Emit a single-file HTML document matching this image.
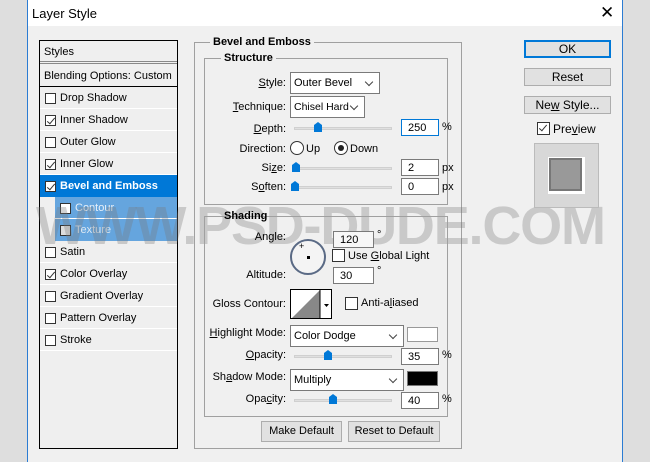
<!DOCTYPE html>
<html><head><style>
*{box-sizing:border-box;margin:0;padding:0}
body{width:650px;height:462px;overflow:hidden;background:#dedede;font-family:"Liberation Sans",Arial,sans-serif;font-size:11px;color:#000;position:relative}
.a{position:absolute}
.dlg{left:27px;top:0;width:596px;height:462px;background:#f0f0f0;border-left:1px solid #2b7cd3;border-right:1px solid #2b7cd3}
.title{left:28px;top:0;width:594px;height:26px;background:#fff;font-size:13px;padding:6px 0 0 4px}
.panel{left:39px;top:40px;width:139px;height:409px;border:1px solid #000;background:#efefef}
.row{position:absolute;left:0;width:137px;height:22px;border-bottom:1px solid #fff;line-height:22px;padding-left:20px}
.cb{position:absolute;width:11px;height:11px;border:1px solid #333;background:#fff}
.row .cb{left:5px;top:6px}
.ck::after{content:"";position:absolute;left:3px;top:0px;width:3px;height:7px;border:solid #333;border-width:0 1px 1px 0;transform:rotate(40deg)}
.box{border:1px solid #a0a0a0}
.lbl{position:absolute;background:#f0f0f0;font-weight:bold;padding:0 3px}
.r{position:absolute;text-align:right}
.dd{position:absolute;background:#fff;border:1px solid #7a7a7a;padding-left:3px;line-height:21px}
.dd::after{content:"";position:absolute;right:7px;top:6px;width:5px;height:5px;border:solid #444;border-width:0 1px 1px 0;transform:rotate(45deg)}
.in{position:absolute;background:#fff;border:1px solid #7a7a7a;padding-left:6px;line-height:17px;height:17px}
.trk{position:absolute;height:3px;background:#e0e0e0;border:1px solid #d0d0d0;width:98px}
.th{position:absolute;width:8px;height:10px;background:#0078d7;clip-path:polygon(0 30%,50% 0,100% 30%,100% 100%,0 100%)}
.btn{position:absolute;background:#e1e1e1;border:1px solid #adadad;text-align:center;line-height:16px;font-size:12px}
u{text-decoration:underline}
</style></head><body>
<div class="a dlg"></div>
<div class="a title">Layer Style</div>
<div class="a" style="left:600px;top:3px;font-size:17px">✕</div>

<div class="a panel">
 <div class="row" style="top:0;padding-left:4px;height:23px;border-bottom:3px double #888">Styles</div>
 <div class="row" style="top:24px;padding-left:4px;border-bottom:1px solid #000">Blending Options: Custom</div>
 <div class="row" style="top:46px"><span class="cb"></span>Drop Shadow</div>
 <div class="row" style="top:68px"><span class="cb ck"></span>Inner Shadow</div>
 <div class="row" style="top:90px"><span class="cb"></span>Outer Glow</div>
 <div class="row" style="top:112px"><span class="cb ck"></span>Inner Glow</div>
 <div class="row" style="top:134px;background:#0078d7;color:#fff;font-weight:bold;border-bottom:0"><span class="cb ck"></span>Bevel and Emboss</div>
 <div class="row" style="top:156px;left:15px;width:122px;background:#65a5de;color:#e8f0f8;border-bottom:1px solid #fff"><span class="cb"></span>Contour</div>
 <div class="row" style="top:178px;left:15px;width:122px;background:#65a5de;color:#dde8f2;border-bottom:0"><span class="cb" style="background:#ddd"></span>Texture</div>
 <div class="row" style="top:200px"><span class="cb"></span>Satin</div>
 <div class="row" style="top:222px"><span class="cb ck"></span>Color Overlay</div>
 <div class="row" style="top:244px"><span class="cb"></span>Gradient Overlay</div>
 <div class="row" style="top:266px"><span class="cb"></span>Pattern Overlay</div>
 <div class="row" style="top:288px"><span class="cb"></span>Stroke</div>
</div>

<div class="a box" style="left:194px;top:42px;width:268px;height:407px"></div>
<div class="lbl" style="left:210px;top:36px">Bevel and Emboss</div>
<div class="a box" style="left:204px;top:58px;width:244px;height:147px"></div>
<div class="lbl" style="left:221px;top:52px">Structure</div>

<div class="r" style="left:220px;width:66px;top:77px"><u>S</u>tyle:</div>
<div class="dd" style="left:290px;top:72px;width:90px;height:22px">Outer Bevel</div>
<div class="r" style="left:220px;width:66px;top:101px"><u>T</u>echnique:</div>
<div class="dd" style="left:290px;top:96px;width:75px;height:22px;font-size:10.5px">Chisel Hard</div>
<div class="r" style="left:220px;width:66px;top:123px"><u>D</u>epth:</div>
<div class="trk" style="left:294px;top:127px"></div><div class="th" style="left:314px;top:122px"></div>
<div class="in" style="left:401px;top:119px;width:38px;border-color:#0078d7">250</div><div class="a" style="left:442px;top:121px">%</div>
<div class="r" style="left:220px;width:66px;top:143px">Direction:</div>
<div class="a" style="left:290px;top:141px;width:14px;height:14px;border:1px solid #333;border-radius:50%;background:#fff"></div><div class="a" style="left:306px;top:143px">Up</div>
<div class="a" style="left:334px;top:141px;width:14px;height:14px;border:1px solid #333;border-radius:50%;background:#fff"></div><div class="a" style="left:338px;top:145px;width:6px;height:6px;border-radius:50%;background:#222"></div><div class="a" style="left:350px;top:143px">Down</div>
<div class="r" style="left:220px;width:66px;top:162px">Si<u>z</u>e:</div>
<div class="trk" style="left:294px;top:167px"></div><div class="th" style="left:292px;top:162px"></div>
<div class="in" style="left:401px;top:159px;width:38px">2</div><div class="a" style="left:442px;top:162px">px</div>
<div class="r" style="left:220px;width:66px;top:181px">S<u>o</u>ften:</div>
<div class="trk" style="left:294px;top:186px"></div><div class="th" style="left:291px;top:181px"></div>
<div class="in" style="left:401px;top:178px;width:38px">0</div><div class="a" style="left:442px;top:181px">px</div>

<div class="a" style="left:36px;top:195px;font:bold 54px 'Liberation Sans',Arial,sans-serif;color:rgba(120,120,120,0.33);letter-spacing:-1.2px;white-space:nowrap">WWW.PSD-DUDE.COM</div>

<div class="a box" style="left:204px;top:216px;width:244px;height:201px"></div>
<div class="lbl" style="left:221px;top:210px;background:transparent">Shading</div>
<div class="r" style="left:220px;width:66px;top:231px">An<u>g</u>le:</div>
<div class="in" style="left:333px;top:231px;width:41px;height:17px;background:#f7f7f7">120</div><div class="a" style="left:377px;top:229px">°</div>
<div class="a" style="left:290px;top:239px;width:36px;height:36px;border:2px solid #5a6a85;border-radius:50%;background:#f4f4f4"></div>
<div class="a" style="left:307px;top:256px;width:3px;height:3px;background:#000"></div>
<div class="a" style="left:299px;top:241px;font-size:9px">+</div>
<div class="cb" style="left:332px;top:249px;width:13px;height:13px"></div><div class="a" style="left:348px;top:250px">Use <u>G</u>lobal Light</div>
<div class="r" style="left:220px;width:66px;top:269px">Altitude:</div>
<div class="in" style="left:333px;top:267px;width:41px">30</div><div class="a" style="left:377px;top:265px">°</div>
<div class="r" style="left:200px;width:86px;top:298px">Gloss Contour:</div>
<div class="a" style="left:290px;top:289px;width:42px;height:30px;border:1px solid #000;background:#fff;overflow:hidden">
<svg width="42" height="30" style="position:absolute;left:0;top:0"><polygon points="0,29 29,0 29,29" fill="#888"/><line x1="29" y1="0" x2="29" y2="29" stroke="#000"/><polygon points="33,14 38,14 35.5,17" fill="#000"/></svg></div>
<div class="cb" style="left:345px;top:297px;width:13px;height:13px"></div><div class="a" style="left:361px;top:297px">Anti-a<u>l</u>iased</div>
<div class="r" style="left:200px;width:86px;top:327px"><u>H</u>ighlight Mode:</div>
<div class="dd" style="left:290px;top:325px;width:114px;height:22px">Color Dodge</div>
<div class="a" style="left:407px;top:327px;width:31px;height:15px;background:#fff;border:1px solid #999"></div>
<div class="r" style="left:220px;width:66px;top:349px"><u>O</u>pacity:</div>
<div class="trk" style="left:294px;top:355px"></div><div class="th" style="left:324px;top:350px"></div>
<div class="in" style="left:401px;top:348px;width:38px">35</div><div class="a" style="left:442px;top:349px">%</div>
<div class="r" style="left:200px;width:86px;top:371px">Sh<u>a</u>dow Mode:</div>
<div class="dd" style="left:290px;top:369px;width:114px;height:22px">Multiply</div>
<div class="a" style="left:407px;top:371px;width:31px;height:15px;background:#000;border:1px solid #777"></div>
<div class="r" style="left:220px;width:66px;top:393px">Opa<u>c</u>ity:</div>
<div class="trk" style="left:294px;top:399px"></div><div class="th" style="left:329px;top:394px"></div>
<div class="in" style="left:401px;top:392px;width:38px">40</div><div class="a" style="left:442px;top:393px">%</div>
<div class="btn" style="left:261px;top:421px;width:81px;height:21px;line-height:19px;font-size:11px">Make Default</div>
<div class="btn" style="left:348px;top:421px;width:92px;height:21px;line-height:19px;font-size:11px">Reset to Default</div>

<div class="btn" style="left:524px;top:40px;width:87px;height:18px;border:2px solid #0078d7;line-height:14px">OK</div>
<div class="btn" style="left:524px;top:68px;width:87px;height:18px">Reset</div>
<div class="btn" style="left:524px;top:96px;width:87px;height:18px">Ne<u>w</u> Style...</div>
<div class="cb ck" style="left:537px;top:122px;width:13px;height:13px"></div>
<div class="a" style="left:553px;top:122px;font-size:12px">Pre<u>v</u>iew</div>
<div class="a" style="left:534px;top:143px;width:65px;height:65px;background:#d8d8d8;border:1px solid #bbb"></div>
<div class="a" style="left:548px;top:157px;width:37px;height:37px;background:#fff"></div>
<div class="a" style="left:549px;top:158px;width:33px;height:33px;background:#999;border:2px solid #777"></div>
</body></html>
